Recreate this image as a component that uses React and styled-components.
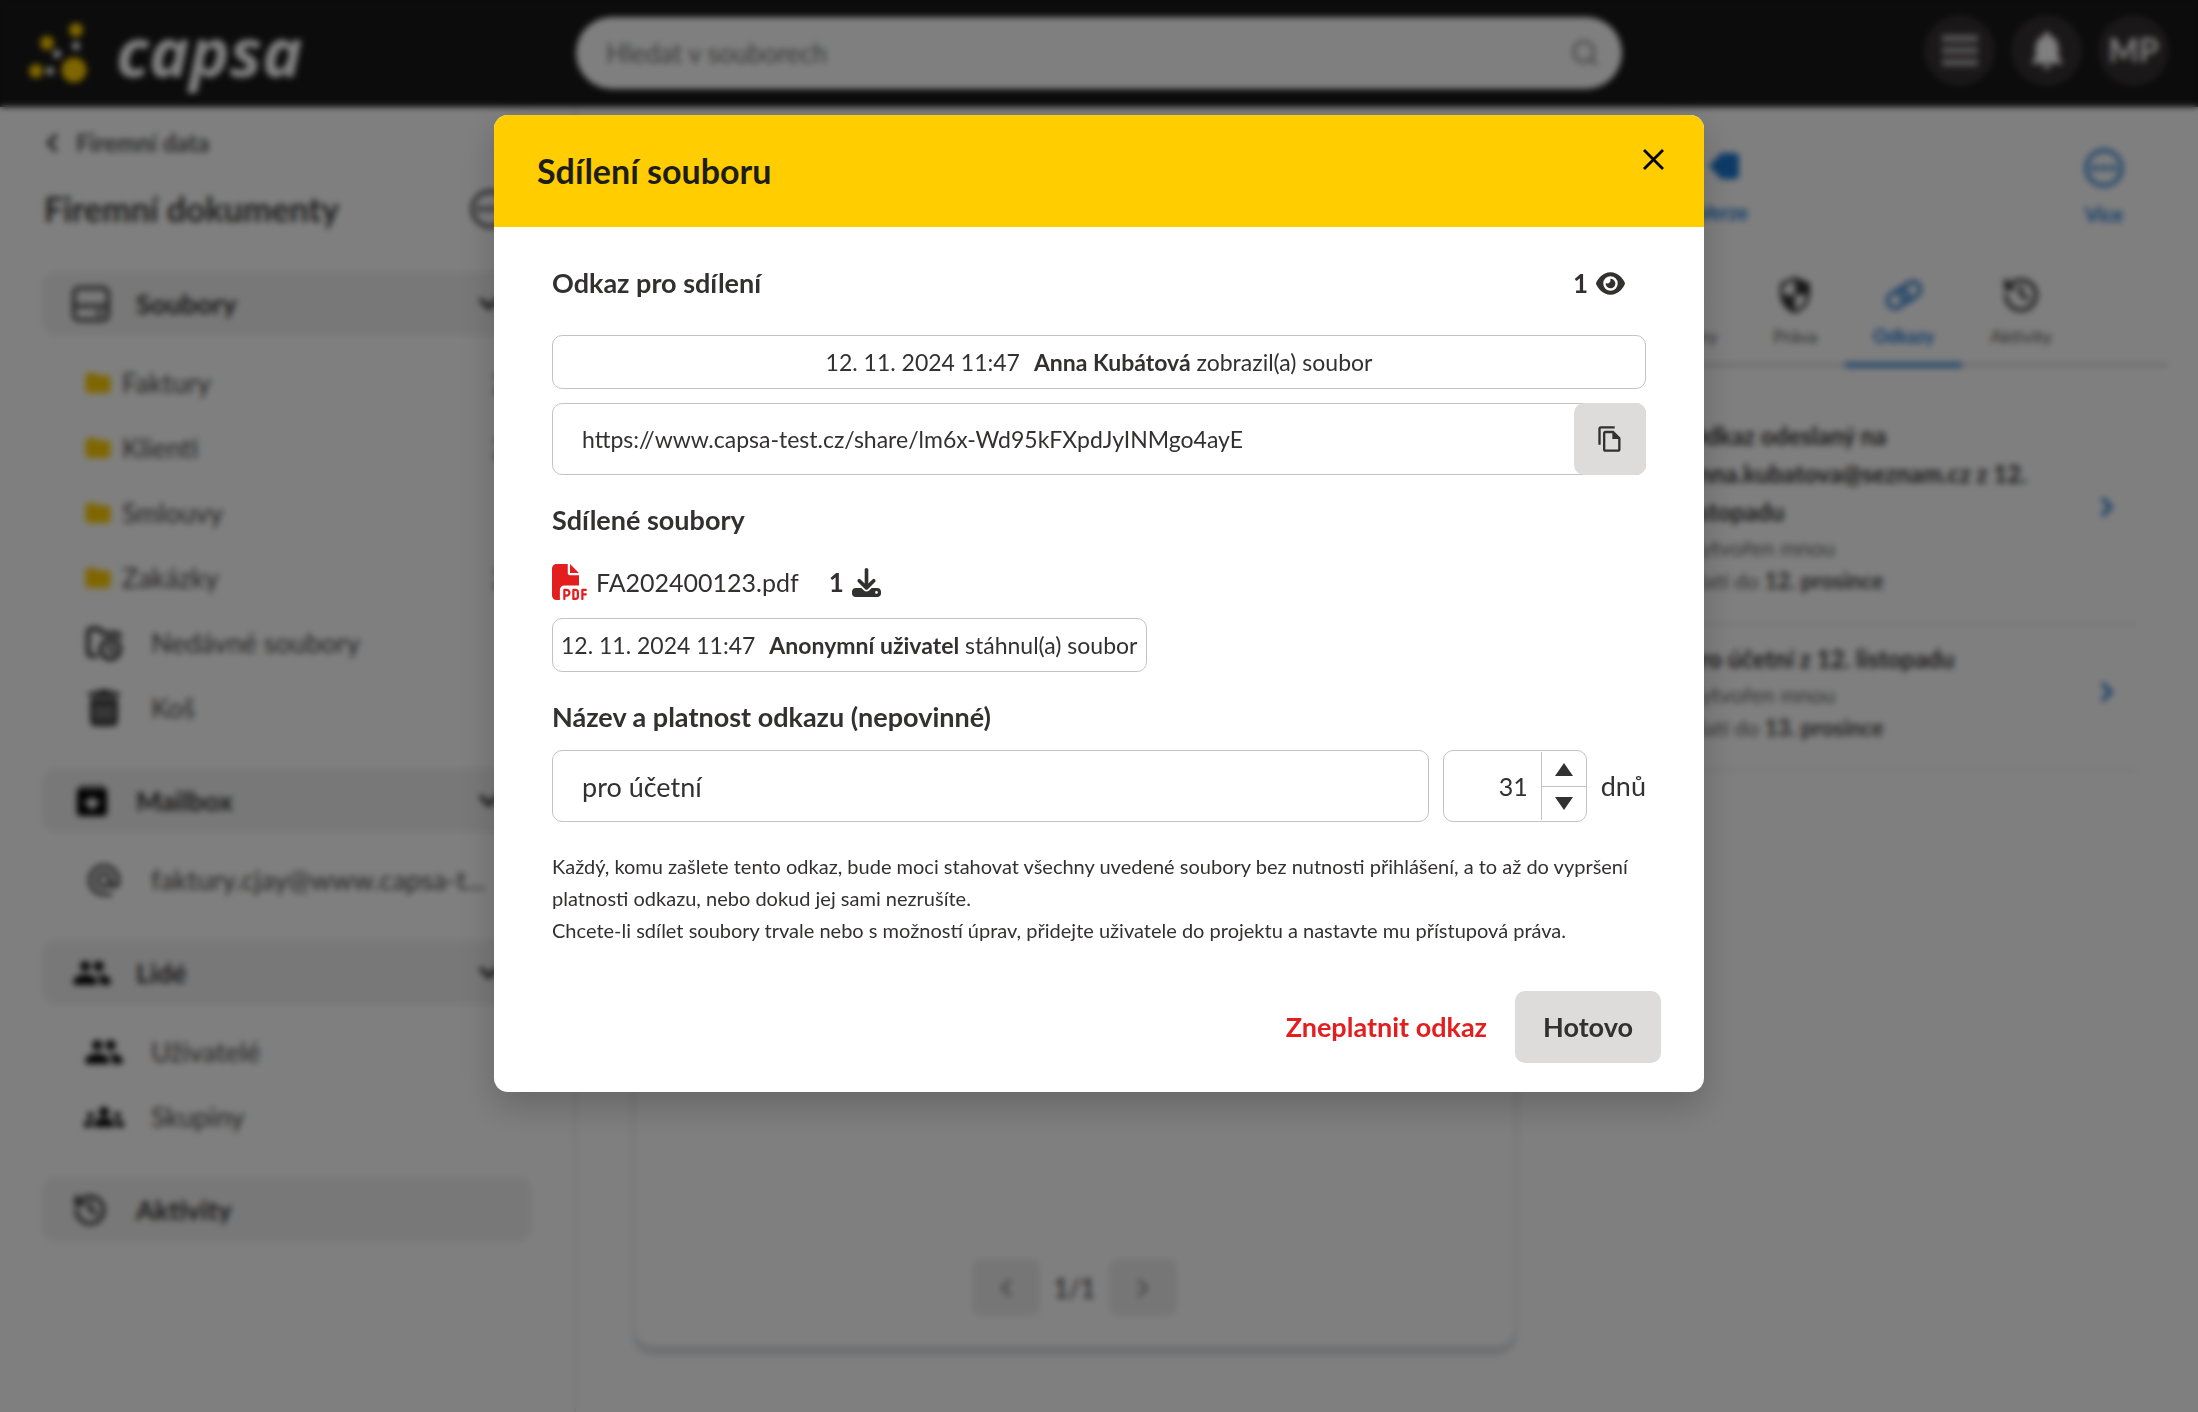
import React, { useState } from 'react';
import styled, { createGlobalStyle, css } from 'styled-components';
import {
  ChevronDown,
  ChevronLeft,
  ChevronRight,
  FolderClock,
  History,
  Search,
} from 'lucide-react';
import {
  MdAlternateEmail,
  MdArchive,
  MdFolder,
  MdGroups,
  MdInsertDriveFile,
  MdNotifications,
  MdOutlineFileCopy,
  MdPeople,
  MdSecurity,
} from 'react-icons/md';
import { FaDownload, FaEye, FaFilePdf, FaTrashCan } from 'react-icons/fa6';

const GlobalStyle = createGlobalStyle`
  *, *::before, *::after { box-sizing: border-box; }
  body {
    margin: 0;
    background: #fff;
    color: #333030;
    font-family: Lato, "Open Sans", "Noto Sans", sans-serif;
    font-size: 26px;
    line-height: 36px;
  }
  h1, h2, h3, p, ul { margin: 0; padding: 0; font-size: inherit; font-weight: inherit; }
  ul { list-style: none; }
  button, input { font: inherit; color: inherit; }
  button { border: 0; padding: 0; background: none; cursor: pointer; }
  a { color: inherit; text-decoration: none; }
  svg { display: block; flex: none; }
`;

/* ---------- top bar ---------- */

const Page = styled.div`
  display: flex;
  flex-direction: column;
  min-height: 100vh;
`;

const TopBar = styled.header`
  display: grid;
  grid-template-columns: 576px minmax(200px, 1fr) 576px;
  align-items: center;
  height: 107px;
  padding-bottom: 1px;
  background: #181818;
  color: #fff;
`;

const Brand = styled.a`
  display: flex;
  align-items: center;
  gap: 28px;
  padding: 0 0 4px 28px;
  font: italic 700 68px/80px "Noto Sans", "Open Sans", sans-serif;
`;

const SearchBox = styled.label`
  display: flex;
  align-items: center;
  height: 72px;
  padding: 0 22px 0 28px;
  border-radius: 36px;
  background: #fff;
  color: #999;
`;

const SearchInput = styled.input`
  flex: 1;
  min-width: 0;
  border: 0;
  background: none;
  &::placeholder { color: #777; opacity: 1; }
`;

const TopActions = styled.div`
  display: flex;
  justify-content: flex-end;
  gap: 16px;
  padding: 0 29px 6px 0;
`;

const RoundButton = styled.button`
  display: grid;
  place-items: center;
  width: 71px;
  height: 71px;
  border-radius: 50%;
  background: #363032;
  color: ${(p) => p.$tone || '#fff'};
  font-size: 32px;
  font-weight: 700;
`;

const Bars = styled.span`
  display: grid;
  gap: 5px;
  i { width: 36px; height: 7px; background: currentColor; }
`;

/* ---------- page columns ---------- */

const Columns = styled.div`
  flex: 1;
  display: grid;
  grid-template-columns: 576px minmax(0, 1fr) 652px;
`;

const Sidebar = styled.nav`
  padding: 18px 42px 44px;
  border-right: 2px solid #e6e6e6;
`;

const BackLink = styled.a`
  display: flex;
  align-items: center;
  gap: 10px;
  font-size: 24px;
  font-weight: 700;
  color: #555;
  svg { margin-left: -4px; }
`;

const ProjectTitle = styled.div`
  display: flex;
  align-items: center;
  justify-content: space-between;
  height: 44px;
  margin: 26px 20px 40px 2px;
  font-size: 34px;
  font-weight: 700;
  color: #3c3a3a;
`;

const Group = styled.section`
  margin-bottom: 28px;
`;

const GroupHeader = styled.a`
  display: grid;
  grid-template-columns: 36px 1fr auto;
  align-items: center;
  gap: 28px;
  height: 65px;
  padding: 0 28px 0 30px;
  border-radius: 14px;
  background: #f1f1f1;
  font-size: 27px;
  font-weight: 700;
`;

const SubList = styled.ul`
  padding-top: 14px;
`;

const SubLink = styled.a`
  display: grid;
  grid-template-columns: ${(p) => (p.$folder ? '28px' : '36px')} minmax(0, 1fr) auto;
  align-items: center;
  gap: ${(p) => (p.$folder ? '10px' : '29px')};
  height: 65px;
  padding: 0 24px 0 ${(p) => (p.$folder ? '42px' : '44px')};
  font-size: 27px;
  white-space: nowrap;
  color: #4a4747;
  > svg { justify-self: center; color: ${(p) => (p.$folder ? '#ffcd00' : '#222')}; }
`;

const Preview = styled.main`
  display: flex;
  padding: 57px 30px 65px 57px;
`;

const PreviewCard = styled.div`
  flex: 1;
  display: flex;
  align-items: flex-end;
  justify-content: center;
  padding-bottom: 29px;
  border: 2px solid #eee;
  border-top-color: transparent;
  border-radius: 20px;
  background: #fff;
  box-shadow: 0 8px 5px #d9dee3;
`;

const Pager = styled.div`
  display: flex;
  align-items: center;
  gap: 14px;
`;

const PagerButton = styled.button`
  display: grid;
  place-items: center;
  width: 68px;
  height: 57px;
  border-radius: 8px;
  background: #ededed;
  color: #999;
`;

/* ---------- detail panel ---------- */

const Detail = styled.aside`
  padding: 39px 30px 0 0;
`;

const DetailActions = styled.div`
  display: flex;
  justify-content: space-between;
  padding: 0 42px 0 152px;
`;

const DetailAction = styled.button`
  display: grid;
  justify-items: center;
  gap: 6px;
  font-size: 20px;
  font-weight: 700;
  color: #1976d2;
`;

const TabBar = styled.div`
  display: flex;
  justify-content: flex-end;
  margin-top: 43px;
  padding-right: 88px;
  border-bottom: 4px solid #ddd;
`;

const Tab = styled.button`
  display: grid;
  justify-items: center;
  gap: 3px;
  margin-bottom: -5px;
  padding: 0 28px 8px;
  border-bottom: 6px solid transparent;
  font-size: 18px;
  color: #555;
  svg { color: #333; }
  ${(p) =>
    p.$active &&
    css`
      border-color: #5a9bdd;
      color: #1976d2;
      font-weight: 700;
      svg { color: #3a86d2; }
    `}
`;

const LinkList = styled.ul`
  padding: 35px 30px 0 0;
`;

const LinkItem = styled.li`
  border-bottom: 2px solid #ececec;
`;

const LinkRow = styled.a`
  display: grid;
  grid-template-columns: 1fr 28px;
  align-items: center;
  gap: 20px;
  padding: 15px 18px 26px 140px;
  > svg { color: #3a86d2; }
`;

const LinkTitle = styled.h3`
  max-width: 360px;
  font-size: 24px;
  font-weight: 700;
  line-height: 38px;
`;

const LinkMeta = styled.p`
  font-size: 22px;
  line-height: 33px;
  color: #666;
  b { color: #444; }
`;

/* ---------- dialog ---------- */

const Backdrop = styled.div`
  position: fixed;
  inset: 0;
  display: flex;
  justify-content: center;
  align-items: flex-start;
  overflow: auto;
  padding: 115px 24px 24px;
  background: rgba(0, 0, 0, 0.5);
  backdrop-filter: blur(3px);
`;

const Dialog = styled.form`
  width: 100%;
  max-width: 1210px;
  overflow: hidden;
  border-radius: 14px;
  background: #fff;
  box-shadow: 0 14px 36px rgba(0, 0, 0, 0.2);
`;

const DialogHeader = styled.header`
  display: flex;
  justify-content: space-between;
  align-items: flex-start;
  padding: 28px 36px 28px 43px;
  background: #ffcd00;
`;

const DialogTitle = styled.h1`
  font-size: 34px;
  line-height: 56px;
  font-weight: 700;
  color: #1d1d1b;
`;

const CloseButton = styled.button`
  display: grid;
  place-items: center;
  width: 29px;
  height: 32px;
  color: #000;
`;

const DialogBody = styled.div`
  padding: 38px 58px 0;
`;

const HeadingRow = styled.div`
  display: flex;
  justify-content: space-between;
  padding-right: 21px;
  margin-bottom: 34px;
`;

const Heading = styled.h2`
  font-size: 27px;
  font-weight: 700;
`;

const Count = styled.span`
  display: flex;
  align-items: center;
  gap: 8px;
  font-weight: 700;
`;

const frame = css`
  border: 1px solid #c5c2c2;
  border-radius: 10px;
  background: #fff;
`;

const LogEntry = styled.div`
  ${frame}
  display: flex;
  align-items: center;
  justify-content: center;
  width: ${(p) => (p.$fit ? 'fit-content' : 'auto')};
  height: 54px;
  padding: 0 8px;
  font-size: 23px;
  white-space: pre;
  time { margin-right: 14px; }
`;

const UrlField = styled.div`
  ${frame}
  display: flex;
  height: 72px;
  margin: 14px 0 27px;
`;

const UrlInput = styled.input`
  flex: 1;
  min-width: 0;
  padding: 0 0 0 29px;
  border: 0;
  background: none;
  font-size: 23px;
  outline: none;
`;

const CopyButton = styled.button`
  display: grid;
  place-items: center;
  width: 72px;
  margin: -1px;
  border-radius: 10px;
  background: #dddcda;
`;

const FileRow = styled.div`
  display: flex;
  align-items: center;
  gap: 8px;
  height: 36px;
  margin: 26px 0 18px;
  > svg { color: #e31e1e; }
  ${Count} { margin-left: 22px; }
`;

const FileName = styled.span`
  font-size: 25px;
`;

const NameLabel = styled.label`
  display: block;
  margin: 27px 0 15px;
  font-size: 27px;
  font-weight: 700;
`;

const NameRow = styled.div`
  display: flex;
  align-items: center;
  gap: 14px;
`;

const NameInput = styled.input`
  ${frame}
  flex: 1;
  min-width: 0;
  height: 72px;
  padding: 0 29px;
  font-size: 27px;
`;

const Stepper = styled.div`
  ${frame}
  display: grid;
  grid-template-columns: 1fr 45px;
  width: 144px;
  height: 72px;
`;

const DaysInput = styled.input`
  min-width: 0;
  padding: 0 13px 0 0;
  border: 0;
  background: none;
  font-size: 25px;
  text-align: right;
  appearance: textfield;
  &::-webkit-inner-spin-button { display: none; }
`;

const DaysUnit = styled.label`
  font-size: 27px;
`;

const StepButtons = styled.div`
  display: grid;
  grid-template-rows: 1fr 1fr;
  border-left: 1px solid #c5c2c2;
  margin: 1px 0;
`;

const StepButton = styled.button`
  display: grid;
  place-items: center;
  & + & { border-top: 1px solid #c5c2c2; }
`;

const Note = styled.p`
  margin-top: 28px;
  font-size: 20px;
  line-height: 32px;
`;

const DialogFooter = styled.footer`
  display: flex;
  justify-content: flex-end;
  align-items: center;
  padding: 45px 43px 29px;
`;

const TextButton = styled.button`
  height: 72px;
  padding: 0 28px;
  border-radius: 10px;
  background: ${(p) => (p.$filled ? '#dddcda' : 'transparent')};
  color: ${(p) => (p.$danger ? '#e31e1e' : 'inherit')};
  font-size: 27px;
  font-weight: 700;
`;

/* ---------- drawings ---------- */

const LogoMark = () => (
  <svg width="60" height="66" viewBox="0 0 60 66" aria-hidden="true">
    <g fill="#ffcd00">
      <circle cx="46" cy="52" r="12.5" />
      <circle cx="48" cy="12" r="7" />
      <circle cx="19" cy="25" r="7" />
      <circle cx="8" cy="53" r="7" />
    </g>
    <g fill="#fff">
      <circle cx="48" cy="28" r="4" />
      <circle cx="29" cy="36" r="4" />
      <circle cx="22" cy="53" r="4" />
    </g>
  </svg>
);

const DriveIcon = () => (
  <svg width="38" height="36" viewBox="0 0 38 36" fill="none" stroke="#333" strokeWidth="3.5">
    <rect x="2" y="2" width="34" height="32" rx="5" />
    <path d="M2 20h34M24 27h7" />
  </svg>
);

const MoreIcon = () => (
  <svg width="44" height="44" viewBox="0 0 44 44" fill="currentColor">
    <circle cx="22" cy="22" r="17.5" fill="none" stroke="currentColor" strokeWidth="3.5" />
    <circle cx="13" cy="22" r="3" />
    <circle cx="22" cy="22" r="3" />
    <circle cx="31" cy="22" r="3" />
  </svg>
);

const ChainIcon = () => (
  <svg width="40" height="40" viewBox="0 0 40 40" fill="none" stroke="currentColor" strokeWidth="4">
    <g transform="rotate(-35 20 20)">
      <rect x="2" y="12" width="22" height="15" rx="7.5" />
      <rect x="16" y="13" width="22" height="15" rx="7.5" />
    </g>
  </svg>
);

const VersionIcon = () => (
  <svg width="40" height="40" viewBox="0 0 40 40" fill="#1976d2">
    <path d="M6 20 18 7h14a4 4 0 0 1 4 4v18a4 4 0 0 1-4 4H18Z" />
  </svg>
);

const CrossIcon = () => (
  <svg width="21" height="21" viewBox="0 0 21 21" stroke="currentColor" strokeWidth="2.8">
    <path d="M1 1 20 20M20 1 1 20" />
  </svg>
);

const Triangle = ({ down }) => (
  <svg width="18" height="13" viewBox="0 0 18 13" fill="#333030">
    <path d={down ? 'M0 0h18L9 13Z' : 'M0 13h18L9 0Z'} />
  </svg>
);

/* ---------- data ---------- */

const groups = [
  {
    name: 'Soubory',
    icon: <DriveIcon />,
    items: [
      { name: 'Faktury', folder: true, count: 2 },
      { name: 'Klienti', folder: true, count: 2 },
      { name: 'Smlouvy', folder: true },
      { name: 'Zakázky', folder: true, count: 2 },
      { name: 'Nedávné soubory', icon: <FolderClock size={38} strokeWidth={2.5} /> },
      { name: 'Koš', icon: <FaTrashCan size={36} /> },
    ],
  },
  {
    name: 'Mailbox',
    icon: <MdArchive size={40} color="#000" />,
    items: [{ name: 'faktury.cjay@www.capsa-t...', icon: <MdAlternateEmail size={38} /> }],
  },
  {
    name: 'Lidé',
    icon: <MdPeople size={40} color="#000" />,
    items: [
      { name: 'Uživatelé', icon: <MdPeople size={40} color="#000" /> },
      { name: 'Skupiny', icon: <MdGroups size={40} color="#000" /> },
    ],
  },
  { name: 'Aktivity', icon: <History size={36} strokeWidth={2.5} /> },
];

const tabs = [
  { name: 'Soubory', icon: <MdInsertDriveFile size={40} /> },
  { name: 'Práva', icon: <MdSecurity size={40} /> },
  { name: 'Odkazy', icon: <ChainIcon />, active: true },
  { name: 'Aktivity', icon: <History size={40} strokeWidth={2.2} /> },
];

const links = [
  { title: 'Odkaz odeslaný na anna.kubatova@seznam.cz z 12. listopadu', until: '12. prosince' },
  { title: 'pro účetní z 12. listopadu', until: '13. prosince' },
];

/* ---------- composition ---------- */

function SidebarGroup({ group }) {
  return (
    <Group>
      <GroupHeader href="#">
        {group.icon}
        <span>{group.name}</span>
        {group.items && <ChevronDown size={30} strokeWidth={3.5} />}
      </GroupHeader>
      {group.items && (
        <SubList>
          {group.items.map((item) => (
            <li key={item.name}>
              <SubLink href="#" $folder={item.folder}>
                {item.folder ? <MdFolder size={30} /> : item.icon}
                <span>{item.name}</span>
                {item.count && <span>{item.count}</span>}
              </SubLink>
            </li>
          ))}
        </SubList>
      )}
    </Group>
  );
}

function ShareDialog() {
  const [name, setName] = useState('pro účetní');
  const [days, setDays] = useState(31);

  return (
    <Dialog role="dialog" aria-labelledby="share-title" onSubmit={(e) => e.preventDefault()}>
      <DialogHeader>
        <DialogTitle id="share-title">Sdílení souboru</DialogTitle>
        <CloseButton type="button" aria-label="Zavřít">
          <CrossIcon />
        </CloseButton>
      </DialogHeader>

      <DialogBody>
        <HeadingRow>
          <Heading>Odkaz pro sdílení</Heading>
          <Count>
            1 <FaEye size={29} />
          </Count>
        </HeadingRow>
        <LogEntry>
          <time>12. 11. 2024 11:47</time>
          <b>Anna Kubátová</b> zobrazil(a) soubor
        </LogEntry>
        <UrlField>
          <UrlInput
            readOnly
            aria-label="Odkaz pro sdílení"
            value="https://www.capsa-test.cz/share/lm6x-Wd95kFXpdJyINMgo4ayE"
          />
          <CopyButton type="button" aria-label="Kopírovat odkaz">
            <MdOutlineFileCopy size={28} />
          </CopyButton>
        </UrlField>

        <Heading>Sdílené soubory</Heading>
        <FileRow>
          <FaFilePdf size={36} />
          <FileName>FA202400123.pdf</FileName>
          <Count>
            1 <FaDownload size={29} />
          </Count>
        </FileRow>
        <LogEntry $fit>
          <time>12. 11. 2024 11:47</time>
          <b>Anonymní uživatel</b> stáhnul(a) soubor
        </LogEntry>

        <NameLabel htmlFor="link-name">Název a platnost odkazu (nepovinné)</NameLabel>
        <NameRow>
          <NameInput id="link-name" value={name} onChange={(e) => setName(e.target.value)} />
          <Stepper>
            <DaysInput
              id="link-days"
              type="number"
              min="1"
              value={days}
              onChange={(e) => setDays(Number(e.target.value))}
            />
            <StepButtons>
              <StepButton type="button" aria-label="Více dnů" onClick={() => setDays(days + 1)}>
                <Triangle />
              </StepButton>
              <StepButton type="button" aria-label="Méně dnů" onClick={() => setDays(Math.max(1, days - 1))}>
                <Triangle down />
              </StepButton>
            </StepButtons>
          </Stepper>
          <DaysUnit htmlFor="link-days">dnů</DaysUnit>
        </NameRow>

        <Note>
          Každý, komu zašlete tento odkaz, bude moci stahovat všechny uvedené soubory bez nutnosti
          přihlášení, a to až do vypršení platnosti odkazu, nebo dokud jej sami nezrušíte.
          <br />
          Chcete-li sdílet soubory trvale nebo s možností úprav, přidejte uživatele do projektu a
          nastavte mu přístupová práva.
        </Note>
      </DialogBody>

      <DialogFooter>
        <TextButton type="button" $danger>
          Zneplatnit odkaz
        </TextButton>
        <TextButton type="submit" $filled>
          Hotovo
        </TextButton>
      </DialogFooter>
    </Dialog>
  );
}

export default function App() {
  return (
    <>
      <GlobalStyle />
      <Page>
        <TopBar>
          <Brand href="#">
            <LogoMark />
            capsa
          </Brand>
          <SearchBox>
            <SearchInput aria-label="Hledat" placeholder="Hledat v souborech" />
            <Search size={30} strokeWidth={2.5} />
          </SearchBox>
          <TopActions>
            <RoundButton $tone="#aaa" aria-label="Menu">
              <Bars>
                <i />
                <i />
                <i />
              </Bars>
            </RoundButton>
            <RoundButton aria-label="Oznámení">
              <MdNotifications size={46} />
            </RoundButton>
            <RoundButton $tone="#fff">MP</RoundButton>
          </TopActions>
        </TopBar>

        <Columns>
          <Sidebar>
            <BackLink href="#">
              <ChevronLeft size={28} strokeWidth={3.5} />
              Firemní data
            </BackLink>
            <ProjectTitle>
              Firemní dokumenty
              <MoreIcon />
            </ProjectTitle>
            {groups.map((group) => (
              <SidebarGroup key={group.name} group={group} />
            ))}
          </Sidebar>

          <Preview>
            <PreviewCard>
              <Pager>
                <PagerButton aria-label="Předchozí strana">
                  <ChevronLeft size={28} strokeWidth={3} />
                </PagerButton>
                <span>1/1</span>
                <PagerButton aria-label="Další strana">
                  <ChevronRight size={28} strokeWidth={3} />
                </PagerButton>
              </Pager>
            </PreviewCard>
          </Preview>

          <Detail>
            <DetailActions>
              <DetailAction>
                <VersionIcon />
                Verze
              </DetailAction>
              <DetailAction>
                <MoreIcon />
                Více
              </DetailAction>
            </DetailActions>
            <TabBar>
              {tabs.map((tab) => (
                <Tab key={tab.name} $active={tab.active}>
                  {tab.icon}
                  {tab.name}
                </Tab>
              ))}
            </TabBar>
            <LinkList>
              {links.map((link) => (
                <LinkItem key={link.title}>
                  <LinkRow href="#">
                    <div>
                      <LinkTitle>{link.title}</LinkTitle>
                      <LinkMeta>Vytvořen mnou</LinkMeta>
                      <LinkMeta>
                        Platí do <b>{link.until}</b>
                      </LinkMeta>
                    </div>
                    <ChevronRight size={30} strokeWidth={3.5} />
                  </LinkRow>
                </LinkItem>
              ))}
            </LinkList>
          </Detail>
        </Columns>
      </Page>

      <Backdrop>
        <ShareDialog />
      </Backdrop>
    </>
  );
}
